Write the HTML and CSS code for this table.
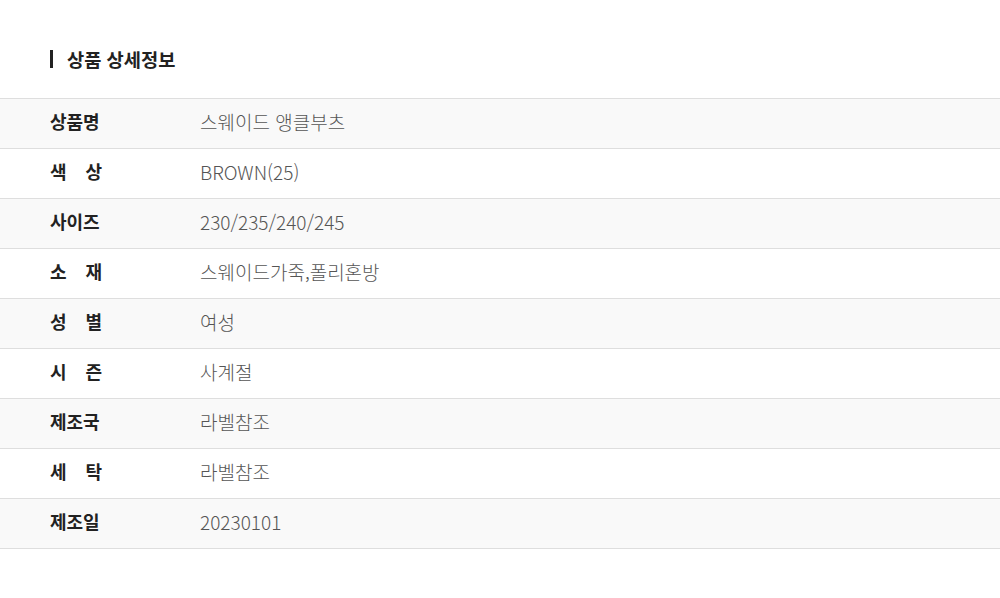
FILE: index.html
```html
<!DOCTYPE html>
<html lang="ko">
<head>
<meta charset="utf-8">
<link rel="stylesheet" href="styles.css">
</head>
<body>
<section class="detail">
  <h2 class="title">상품 상세정보</h2>
  <div class="table">
    <div class="row"><div class="label"><span class="lbl">상품명</span></div><div class="value">스웨이드 앵클부츠</div></div>
    <div class="row"><div class="label"><span class="lbl">색 상</span></div><div class="value">BROWN(25)</div></div>
    <div class="row"><div class="label"><span class="lbl">사이즈</span></div><div class="value">230/235/240/245</div></div>
    <div class="row"><div class="label"><span class="lbl">소 재</span></div><div class="value">스웨이드가죽,폴리혼방</div></div>
    <div class="row"><div class="label"><span class="lbl">성 별</span></div><div class="value">여성</div></div>
    <div class="row"><div class="label"><span class="lbl">시 즌</span></div><div class="value">사계절</div></div>
    <div class="row"><div class="label"><span class="lbl">제조국</span></div><div class="value">라벨참조</div></div>
    <div class="row"><div class="label"><span class="lbl">세 탁</span></div><div class="value">라벨참조</div></div>
    <div class="row"><div class="label"><span class="lbl">제조일</span></div><div class="value">20230101</div></div>
  </div>
</section>
</body>
</html>
```
FILE: styles.css
```css
* { box-sizing: border-box; }
html, body { margin: 0; padding: 0; background: #fff; }
body {
  font-family: "Noto Sans CJK KR", "Noto Sans", sans-serif;
  color: #222;
}
.detail { padding-top: 50px; }
.title {
  margin: 0 0 30px 50px;
  padding-left: 14px;
  border-left: 3px solid #222;
  font-size: 18.7px;
  font-weight: 700;
  line-height: 18px;
  height: 18px;
  display: flex;
  align-items: center;
  color: #222;
}
.table { border-top: 1px solid #dedede; }
.row {
  display: flex;
  height: 50px;
  padding-bottom: 5px;
  align-items: center;
  border-bottom: 1px solid #dedede;
}
.row:nth-child(odd) { background: #f9f9f9; }
.label { width: 200px; padding-left: 50px; font-size: 18px; font-weight: 700; color: #222; }
.lbl {
  display: inline-block;
  width: 52px;
  text-align: justify;
  text-align-last: justify;
}
.value { color: #555; font-size: 19px; font-weight: 300; }
```
